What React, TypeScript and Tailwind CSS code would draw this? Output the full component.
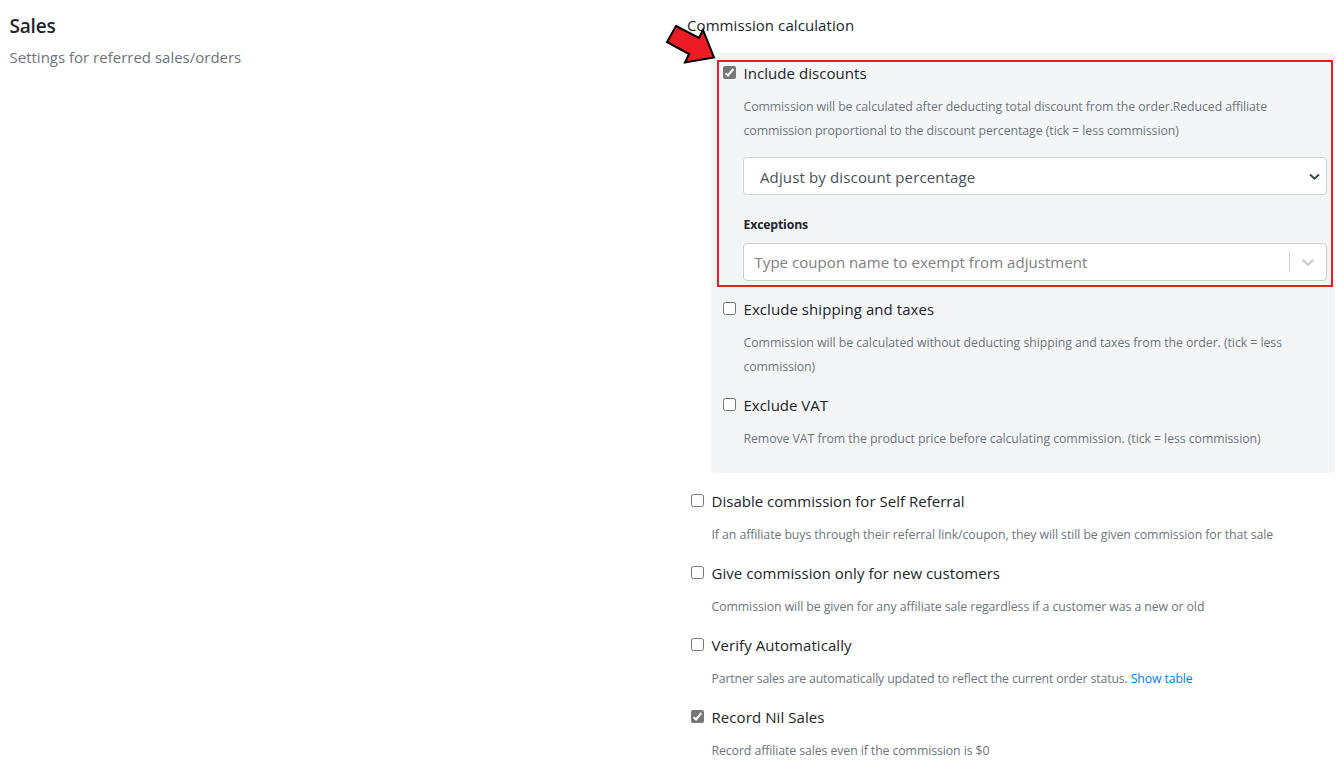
import type { ReactNode } from "react";

function Checkbox({ checked }: { checked?: boolean }) {
  return (
    <svg className="mt-[5px] size-[13px] shrink-0" viewBox="0 0 13 13" role="checkbox" aria-checked={!!checked}>
      {checked ? (
        <>
          <rect width="13" height="13" rx="2" fill="#767676" />
          <path d="M2.6 7.2 5 9.5 10.3 3" fill="none" stroke="#fff" strokeWidth="2" />
        </>
      ) : (
        <rect x="0.5" y="0.5" width="12" height="12" rx="2" fill="#fff" stroke="#767676" />
      )}
    </svg>
  );
}

function Option({ label, checked, track = "", children }: { label: string; checked?: boolean; track?: string; children: ReactNode }) {
  return (
    <div className="flex">
      <Checkbox checked={checked} />
      <div className="ml-[7px] min-w-0 flex-1">
        <div className={`h-6 whitespace-nowrap pl-[0.5px] text-[15px] leading-6 ${track}`}>{label}</div>
        {children}
      </div>
    </div>
  );
}

function Hint({ children, track = "" }: { children: ReactNode; track?: string }) {
  return <div className={`whitespace-nowrap pl-[0.5px] text-[12.3px] leading-6 text-[#6c757d] ${track}`}>{children}</div>;
}

export default function App() {
  return (
    <main className="relative flex h-[773px] w-[1342px] overflow-hidden bg-white font-['Open_Sans',sans-serif] text-[#212529]">
      <section className="w-[687px] pl-[9.5px] pt-[14px]">
        <h1 className="text-[19px] font-semibold leading-6 tracking-[-0.2px]">Sales</h1>
        <p className="mt-[7px] text-[15px] leading-6 text-[#6c757d]">Settings for referred sales/orders</p>
      </section>

      <section className="w-[648px] pt-[13px]">
        <h2 className="text-[15px] leading-6 tracking-[0.08px]">Commission calculation</h2>
        <div className="ml-6 mt-4 h-[420px] rounded bg-[#f4f5f7] pl-3 pr-2 pt-2">
          <Option label="Include discounts" checked track="tracking-[0.05px]">
            <div className="mt-[10px]">
              <Hint track="tracking-[-0.083px]">Commission will be calculated after deducting total discount from the order.Reduced affiliate</Hint>
              <Hint track="tracking-[-0.05px]">commission proportional to the discount percentage (tick = less commission)</Hint>
            </div>
            <div className="mt-[14px] flex h-[38px] items-center justify-between rounded border border-[#ced4da] bg-white pl-4 pr-[6px] text-[15px] text-[#495057]">
              <span className="pt-[2px] tracking-[0.14px]">Adjust by discount percentage</span>
              <svg className="mt-px h-[8px] w-[11px]" viewBox="0 0 11 8">
                <path d="M1 1.5 5.5 5.7 10 1.5" fill="none" stroke="#41464c" strokeWidth="2" />
              </svg>
            </div>
            <div className="mt-[18px] pl-[0.5px] text-[12.3px] font-bold leading-6 tracking-[-0.18px]">Exceptions</div>
            <div className="mt-[6px] flex h-[38px] items-center rounded border border-[#cccccc] bg-white pl-[10px] text-[15px] text-[#808080]">
              <span className="flex-1 pl-[0.5px] tracking-[0.05px]">Type coupon name to exempt from adjustment</span>
              <span className="h-5 w-px bg-[#cccccc]" />
              <svg className="mx-2 size-5" viewBox="0 0 20 20" fill="#cccccc">
                <path d="M4.516 7.548c0.436-0.446 1.043-0.481 1.576 0l3.908 3.747 3.908-3.747c0.533-0.481 1.141-0.446 1.574 0 0.436 0.445 0.408 1.197 0 1.615-0.406 0.418-4.695 4.502-4.695 4.502-0.217 0.223-0.502 0.335-0.787 0.335s-0.57-0.112-0.789-0.335c0 0-4.287-4.084-4.695-4.502s-0.436-1.17 0-1.615z" />
              </svg>
            </div>
          </Option>
          <div className="mt-4">
            <Option label="Exclude shipping and taxes" track="tracking-[0.06px]">
              <div className="mt-[10px]">
                <Hint track="tracking-[-0.048px]">Commission will be calculated without deducting shipping and taxes from the order. (tick = less</Hint>
                <Hint track="tracking-[-0.1px]">commission)</Hint>
              </div>
            </Option>
          </div>
          <div className="mt-[14px]">
            <Option label="Exclude VAT">
              <div className="mt-[10px]">
                <Hint track="tracking-[-0.064px]">Remove VAT from the product price before calculating commission. (tick = less commission)</Hint>
              </div>
            </Option>
          </div>
        </div>

        <div className="ml-1 mt-4 flex flex-col gap-[14px]">
          <Option label="Disable commission for Self Referral" track="tracking-[0.02px]">
            <div className="mt-[10px]">
              <Hint track="tracking-[-0.074px]">If an affiliate buys through their referral link/coupon, they will still be given commission for that sale</Hint>
            </div>
          </Option>
          <Option label="Give commission only for new customers" track="tracking-[0.05px]">
            <div className="mt-[10px]">
              <Hint track="tracking-[-0.075px]">Commission will be given for any affiliate sale regardless if a customer was a new or old</Hint>
            </div>
          </Option>
          <Option label="Verify Automatically" track="tracking-[0.07px]">
            <div className="mt-[10px]">
              <Hint track="tracking-[-0.14px]">
                Partner sales are automatically updated to reflect the current order status. <a className="text-[#007bff]">Show table</a>
              </Hint>
            </div>
          </Option>
          <Option label="Record Nil Sales" checked track="tracking-[0.08px]">
            <div className="mt-[10px]">
              <Hint track="tracking-[-0.09px]">Record affiliate sales even if the commission is $0</Hint>
            </div>
          </Option>
        </div>
      </section>

      <div className="pointer-events-none absolute left-[717px] top-[60px] h-[227px] w-[616px] border-2 border-[#ed1c24]" />
      <svg className="pointer-events-none absolute left-[660px] top-[20px] h-[50px] w-[60px]" viewBox="0 0 60 50">
        <path d="M16 6 39 18 43 10 54 37.5 25 42.5 29 34 7 22Z" fill="#ed1c24" stroke="#000" strokeWidth="2" />
      </svg>
    </main>
  );
}
